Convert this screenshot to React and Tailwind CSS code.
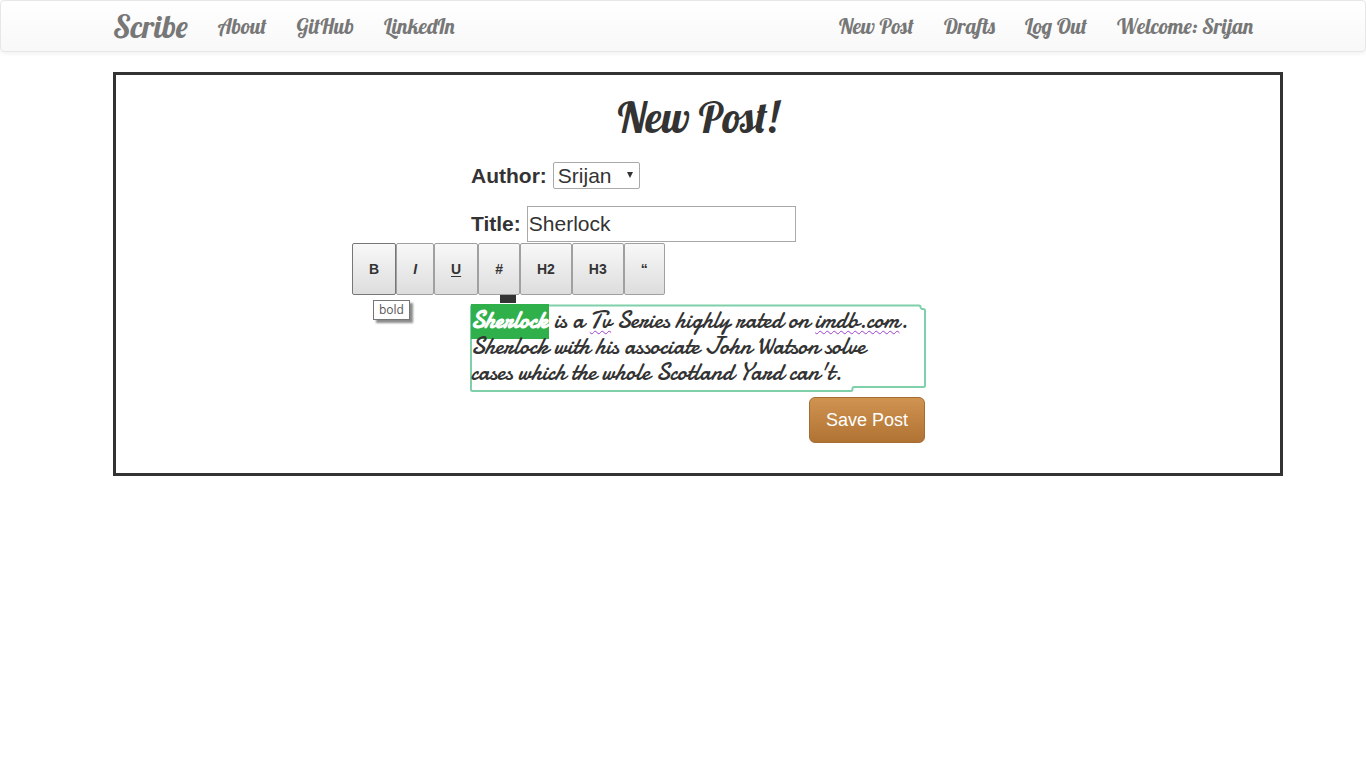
import { useState } from "react";

const leftLinks = ["About", "GitHub", "LinkedIn"];
const rightLinks = ["New Post", "Drafts", "Log Out", "Welcome: Srijan"];

const tools = [
  { label: "B", title: "bold", style: "border-[#777]" },
  { label: "I", title: "italic", style: "border-[#a0a0a0] italic" },
  { label: "U", title: "underline", style: "border-[#a0a0a0] underline underline-offset-2" },
  { label: "#", title: "link", style: "border-[#a0a0a0]" },
  { label: "H2", title: "heading 2", style: "border-[#a0a0a0]" },
  { label: "H3", title: "heading 3", style: "border-[#a0a0a0]" },
  { label: "“", title: "quote", style: "border-[#a0a0a0]" },
];

function NavLinks({ items }) {
  return (
    <ul className="flex gap-[30px]">
      {items.map((item) => (
        <li key={item}>
          <a href="#" className="text-[21px] whitespace-nowrap">{item}</a>
        </li>
      ))}
    </ul>
  );
}

function Navbar() {
  return (
    <nav className="rounded border border-[#e7e7e7] bg-linear-to-b from-white to-[#f8f8f8] shadow-[0_1px_5px_rgba(0,0,0,0.075)]">
      <div className="mx-auto flex h-[50px] max-w-[1170px] items-center px-[15px] pt-0.5 font-['Lobster','Liberation_Serif',serif] text-[#777]">
        <a href="#" className="mr-[30px] text-[31px]">Scribe</a>
        <NavLinks items={leftLinks} />
        <div className="ml-auto">
          <NavLinks items={rightLinks} />
        </div>
      </div>
    </nav>
  );
}

function Toolbar() {
  return (
    <div className="absolute -top-[62px] -left-[119px]">
      <div role="toolbar" aria-label="Formatting" className="flex">
        {tools.map((tool) => (
          <button
            key={tool.title}
            type="button"
            aria-label={tool.title}
            className={`h-[52px] rounded-xs border bg-linear-to-b from-[#f8f8f8] to-[#dddddd] px-4 text-sm font-bold ${tool.style}`}
          >
            {tool.label}
          </button>
        ))}
      </div>
      <div className="mx-auto h-2 w-4 bg-[#333]" />
      <div
        role="tooltip"
        className="absolute top-[57px] left-[21px] border border-[#767676] bg-white px-[5px] font-['Open_Sans',sans-serif] text-xs leading-[18px] text-[#575757] shadow-[3px_3px_2px_rgba(0,0,0,0.45)]"
      >
        bold
      </div>
    </div>
  );
}

function Misspelled({ children }) {
  return (
    <span className="underline decoration-[#a03fd0] decoration-wavy decoration-1 underline-offset-2">
      {children}
    </span>
  );
}

function Editor() {
  return (
    <div className="relative">
      <svg
        className="pointer-events-none absolute top-0 left-0 h-[87px] w-[455px] overflow-visible"
        viewBox="0 0 455 87"
        fill="none"
        aria-hidden="true"
      >
        <path
          d="M1.500 .5H448Q449.500 .5 449.500 2Q449.500 3.500 451 4H452Q454 4 454 5.500V80.500Q454 82 452.500 82H383Q381.500 82 381.500 84Q381.500 86 380 86H1.500Q0 86 0 84.500V2Q0 .5 1.500 .5Z"
          stroke="#7fcfaa"
          strokeWidth="2"
        />
      </svg>
      <div
        role="textbox"
        aria-label="Post body"
        aria-multiline="true"
        contentEditable
        suppressContentEditableWarning
        spellCheck={false}
        className="relative min-h-[86px] pt-[3px] font-['Satisfy','Damion','Dancing_Script','Liberation_Serif',serif] text-2xl leading-[26px] whitespace-nowrap outline-none"
      >
        <strong className="bg-[#30b04a] pb-0.5 text-white">Sherlock</strong> is a{" "}
        <Misspelled>Tv</Misspelled> Series highly rated on <Misspelled>imdb.com</Misspelled>.
        <br />
        Sherlock with his associate John Watson solve
        <br />
        cases which the whole Scotland Yard can't.
      </div>
      <Toolbar />
    </div>
  );
}

export default function App() {
  const [author, setAuthor] = useState("Srijan");
  const [title, setTitle] = useState("Sherlock");
  return (
    <div className="font-['Liberation_Sans',Arial,sans-serif] text-[#333]">
      <Navbar />
      <main className="mx-auto mt-5 max-w-[1170px] px-[15px]">
        <div className="-mr-[30px] border-3 border-[#333] pb-[30px]">
          <h1 className="pt-[18px] text-center font-['Lobster','Liberation_Serif',serif] text-[42px] leading-[50px]">
            New Post!
          </h1>
          <form className="mx-auto w-[454px]" onSubmit={(e) => e.preventDefault()}>
            <div className="mt-[17px] flex h-[31px] items-center gap-1.5 text-[21px]">
              <label htmlFor="author" className="font-bold">Author:</label>
              <div className="relative">
                <select
                  id="author"
                  value={author}
                  onChange={(e) => setAuthor(e.target.value)}
                  className="block h-[27px] w-[87px] appearance-none rounded-xs border border-[#a9a9a9] bg-white pl-1 leading-[25px]"
                >
                  <option>Srijan</option>
                </select>
                <svg viewBox="0 0 6 6" className="pointer-events-none absolute top-2.5 right-[7px] size-1.5" aria-hidden="true">
                  <path d="M0 0H6L3 6Z" fill="#333" />
                </svg>
              </div>
            </div>
            <div className="mt-[15px] flex items-center gap-1.5 text-[21px]">
              <label htmlFor="title" className="font-bold">Title:</label>
              <input
                id="title"
                value={title}
                onChange={(e) => setTitle(e.target.value)}
                className="h-9 w-[269px] border border-[#a9a9a9] bg-white px-px outline-none"
              />
            </div>
            <div className="mt-[63px]">
              <Editor />
            </div>
            <div className="mt-1.5 flex justify-end">
              <button
                type="submit"
                className="h-[46px] rounded-md border border-[#a56c33] bg-linear-to-b from-[#d09350] to-[#b07333] px-4 text-lg text-white"
              >
                Save Post
              </button>
            </div>
          </form>
        </div>
      </main>
    </div>
  );
}
